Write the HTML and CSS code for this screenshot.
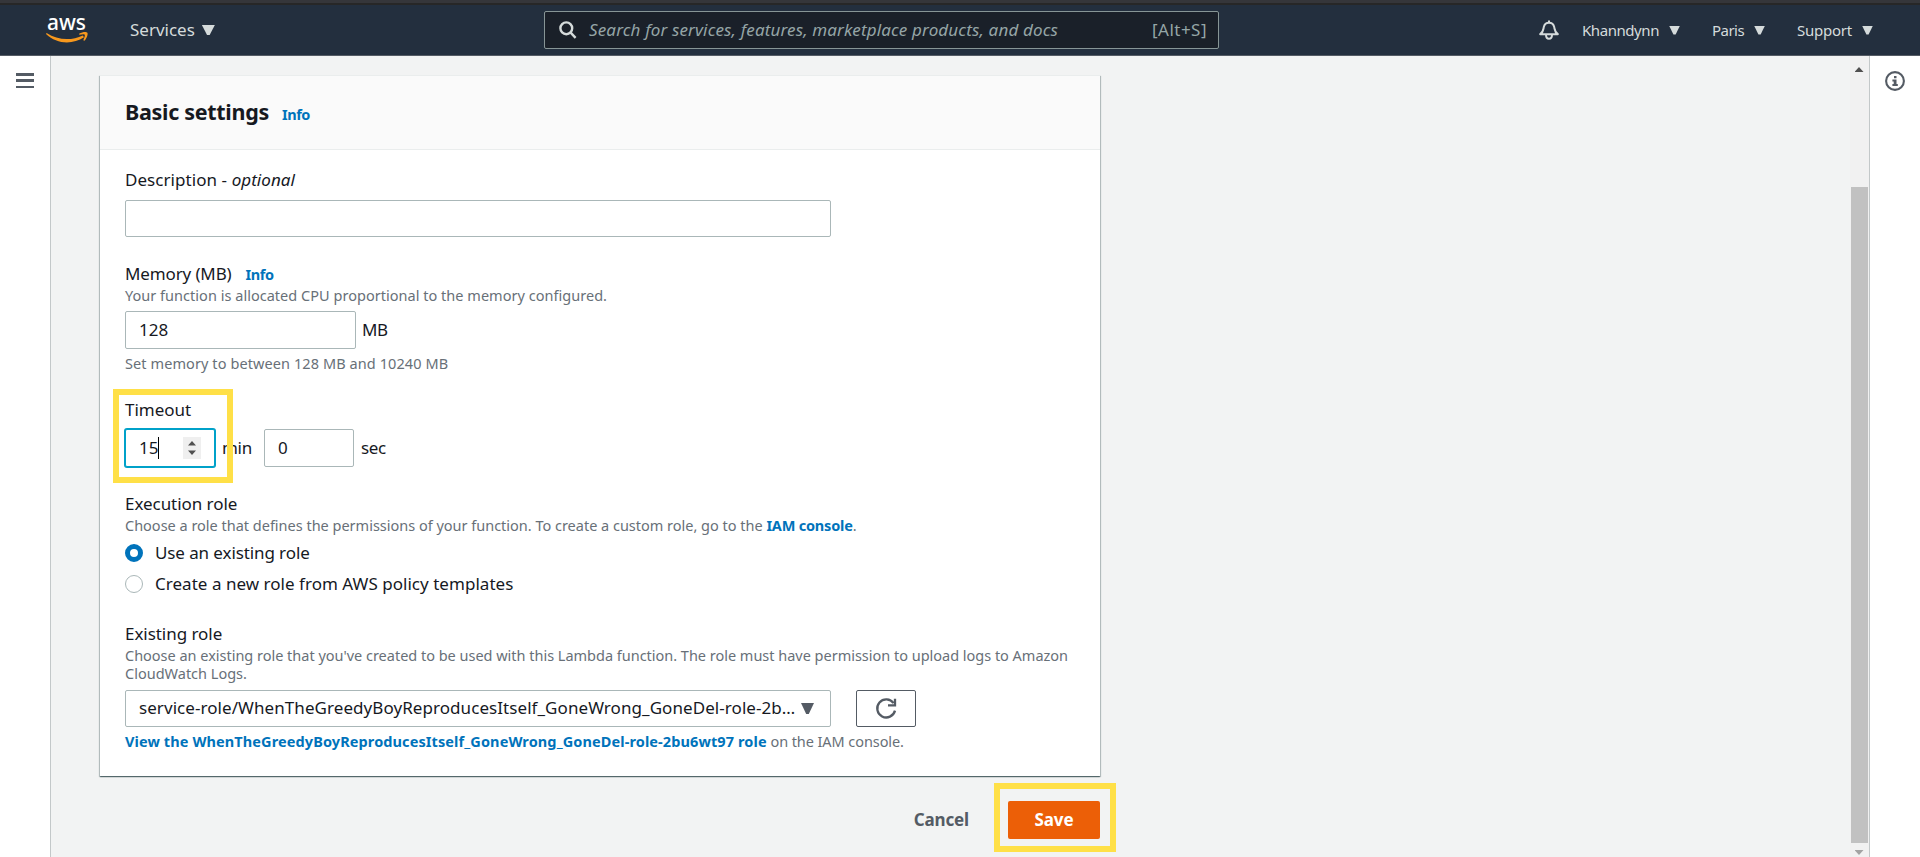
FILE: index.html
```html
<!DOCTYPE html>
<html lang="en">
<head>
<meta charset="utf-8">
<title>Basic settings</title>
<link rel="stylesheet" href="styles.css">
</head>
<body>
<div class="window-edge"></div>
<header class="nav">
  <svg class="logo" viewBox="0 0 42 26" width="42" height="26"><text class="logo-text" x="1" y="13.2" textLength="39" lengthAdjust="spacingAndGlyphs">aws</text><path d="M0.6 16C12 23.6 26 23.6 36.8 18.4L38 20.2C27 27.6 11 27.6 0 17Z" fill="#f7981d"/><path d="M33 16.8C37 14.4 40.5 14.6 41.4 15.7C42.2 17 40.8 21.5 38.4 23.8L37.3 23.2C38.6 20 39.2 18.2 38.7 17.7C38 17 36 17.3 33.4 17.8Z" fill="#f7981d"/></svg>
  <div class="services"><span>Services</span><i class="tri tri-lg"></i></div>
  <div class="search">
    <svg width="18" height="18" viewBox="0 0 18 18" fill="none" stroke="#d5dbdb" stroke-width="2.4"><circle cx="7.3" cy="7.3" r="5.9"/><path d="M11.4 11.4L16.6 16.8"/></svg>
    <span class="placeholder">Search for services, features, marketplace products, and docs</span>
    <span class="shortcut">[Alt+S]</span>
  </div>
  <svg class="bell" width="20" height="20" viewBox="0 0 20 20" fill="none" stroke="#d5dbdb" stroke-width="2" stroke-linejoin="round"><path d="M1.2 14.2C4.5 12 4.2 9.5 4.8 7C5.4 4.4 7 2.8 10 2.8S14.6 4.4 15.2 7C15.8 9.5 15.5 12 18.8 14.2Z"/><path d="M10 0.4V3M7 14.5C7 20.2 13 20.2 13 14.5"/></svg>
  <div class="menu m-user"><span>Khanndynn</span><i class="tri"></i></div>
  <div class="menu m-region"><span>Paris</span><i class="tri"></i></div>
  <div class="menu m-support"><span>Support</span><i class="tri"></i></div>
</header>
<div class="shell">
  <aside class="side side-left"><div class="burger"><i></i><i></i><i></i></div></aside>
  <main class="content">
    <section class="card">
      <div class="card-head"><h1 class="title">Basic settings</h1><a class="info">Info</a></div>
      <div class="card-body">
        <div class="label"><span class="t-desc">Description - <em>optional</em></span></div>
        <div class="input wide"></div>

        <div class="label gap-a"><span class="t-mem">Memory (MB)</span><a class="info info-sm">Info</a></div>
        <div class="hint"><span class="t-alloc">Your function is allocated CPU proportional to the memory configured.</span></div>
        <div class="row mem-row"><div class="input mem">128</div><span class="unit mb">MB</span></div>
        <div class="hint below"><span class="t-range">Set memory to between 128 MB and 10240 MB</span></div>

        <div class="label gap-b"><span>Timeout</span><div class="mark mark-time"></div></div>
        <div class="row time-row">
          <div class="input short focus"><span class="value">15</span><i class="caret"></i><span class="spin"><svg width="8" height="14" viewBox="0 0 8 14"><path d="M0 4.5L4 0L8 4.5ZM0 9.5L4 14L8 9.5Z" fill="#505050"/></svg></span></div>
          <span class="unit min">min</span>
          <div class="input short">0</div>
          <span class="unit sec">sec</span>
        </div>

        <div class="label gap-c"><span class="t-role">Execution role</span></div>
        <div class="hint"><span class="t-choose">Choose a role that defines the permissions of your function. To create a custom role, go to the <a>IAM console</a>.</span></div>
        <div class="radio r1"><i class="dot on"></i><span class="t-use">Use an existing role</span></div>
        <div class="radio r2"><i class="dot"></i><span class="t-create">Create a new role from AWS policy templates</span></div>

        <div class="label gap-d"><span class="t-role">Existing role</span></div>
        <div class="hint two"><span class="t-long">Choose an existing role that you've created to be used with this Lambda function. The role must have permission to upload logs to Amazon</span><br><span>CloudWatch Logs.</span></div>
        <div class="row select-row">
          <div class="input wide select"><span class="t-sel">service-role/WhenTheGreedyBoyReproducesItself_GoneWrong_GoneDel-role-2b…</span><i class="tri tri-dark"></i></div>
          <div class="refresh"><svg width="22" height="22" viewBox="0 0 22 22" fill="none" stroke="#545b64" stroke-width="2.3"><path d="M18.6 5.2A9 9 0 1 0 20 12.6"/><path d="M20 0.8V7.3H13"/></svg></div>
        </div>
        <div class="hint view"><a class="t-view">View the WhenTheGreedyBoyReproducesItself_GoneWrong_GoneDel-role-2bu6wt97 role</a> <span class="t-on">on the IAM console.</span></div>
      </div>
    </section>
    <div class="actions"><span class="cancel">Cancel</span><div class="save"><span>Save</span><div class="mark mark-save"></div></div></div>
  </main>
  <div class="scroll"><i class="up"></i><i class="thumb"></i><i class="down"></i></div>
  <aside class="side side-right"><svg width="20" height="20" viewBox="0 0 20 20"><circle cx="10" cy="10" r="8.9" fill="none" stroke="#545b64" stroke-width="2.1"/><path d="M9 5H11.5V7.3H9ZM7.4 8.6H11.5V13H12.8V15H7.4V13H8.7V10.6H7.4Z" fill="#545b64"/></svg></aside>
</div>
</body>
</html>
```
FILE: styles.css
```css
* { box-sizing: border-box; }
body {
  margin: 0;
  height: 857px;
  overflow: hidden;
  display: flex;
  flex-direction: column;
  font-family: "Noto Sans", "Open Sans", sans-serif;
  font-size: 17px;
  color: #16191f;
  background: #f2f3f3;
}
i { display: block; flex: none; }
span, a, h1 { white-space: nowrap; }
a { color: #0073bb; font-weight: 700; }

.window-edge { flex: none; height: 5px; background: #272727; border-top: 3px solid #35363a; }
.nav {
  flex: none;
  height: 51px;
  display: flex;
  align-items: center;
  padding: 0 47px 1px 46px;
  background: #232f3e;
  border-bottom: 1px solid #545b64;
  color: #d5dbdb;
}
.logo { flex: none; overflow: visible; }
.logo-text { font-family: "Noto Sans", sans-serif; font-size: 22px; font-weight: 500; fill: #fff; }
.services { flex: none; display: flex; align-items: center; gap: 7px; width: 414px; margin-left: 42px; }
.tri { width: 11px; height: 9px; background: #d5dbdb; clip-path: polygon(0 0, 100% 0, 60% 100%, 40% 100%); }
.tri-lg { width: 13px; height: 10px; }
.nav .tri { margin-top: 1px; }
.search {
  flex: none;
  display: flex;
  align-items: center;
  width: 675px;
  height: 38px;
  padding: 0 11px 0 14px;
  background: #1a2029;
  border: 1px solid #879596;
  border-radius: 2px;
  color: #95a5a6;
}
.placeholder { margin-left: 12px; font-style: italic; letter-spacing: .152px; }
.shortcut { margin-left: auto; letter-spacing: .48px; }
.bell { flex: none; margin: 0 23px 0 auto; }
.menu { flex: none; display: flex; align-items: center; gap: 10px; font-size: 15px; }
.m-user, .m-region { margin-right: 32px; }
.m-user { letter-spacing: -.43px; }
.m-region { letter-spacing: -.55px; }
.m-support { letter-spacing: -.24px; }

.shell { flex: 1; display: flex; min-height: 0; }
.side { flex: none; background: #fff; }
.side-left { width: 51px; border-right: 1px solid #c3c8c9; padding: 17px 16px; }
.side-right { width: 51px; border-left: 1px solid #c3c8c9; padding: 15px; }
.side-right svg { display: block; }
.burger { display: flex; flex-direction: column; gap: 3.5px; }
.burger i { width: 18px; height: 2.8px; background: #545b64; }
.content { flex: 1; padding: 19px 0 0 49px; }
.scroll { flex: none; width: 19px; padding-right: 1px; display: flex; flex-direction: column; align-items: center; background: #f1f1f1; }
.up { width: 9px; height: 5px; margin-top: 11px; background: #505050; clip-path: polygon(0 100%, 50% 0, 100% 100%); }
.thumb { width: 17px; height: 656px; margin-top: 115px; background: #c1c1c1; }
.down { width: 9px; height: 5px; margin-top: 7px; background: #a3a3a3; clip-path: polygon(0 0, 50% 100%, 100% 0); }

.card {
  width: 1000px;
  height: 701px;
  background: #fff;
  box-shadow: 0 1px 1px 0 rgba(0, 28, 36, .45), 1px 1px 1px 0 rgba(0, 28, 36, .2), -1px 1px 1px 0 rgba(0, 28, 36, .2);
  border-top: 1px solid #eaeded;
}
.card-head {
  display: flex;
  height: 74px;
  padding-left: 25px;
  background: #fafafa;
  border-bottom: 1px solid #eaeded;
}
.title { margin: 0; font-size: 21.5px; line-height: 72px; font-weight: 700; letter-spacing: -.3px; }
.info { margin-left: 13px; font-size: 14.5px; line-height: 76px; letter-spacing: -.44px; }
.card-body { padding: 18px 25px 0; }
.label { position: relative; display: flex; height: 24px; line-height: 24px; }
.info-sm { margin-left: 14px; line-height: 25px; }
.hint { height: 18px; font-size: 14.5px; line-height: 18px; color: #687078; }
.hint.two { height: 37px; line-height: 18px; }
.input {
  flex: none;
  height: 38px;
  padding-left: 13px;
  line-height: 35px;
  background: #fff;
  border: 1px solid #aab7b8;
  border-radius: 2px;
}
.wide { width: 706px; height: 37px; }
.label + .wide { margin-top: 8px; }
.row { display: flex; align-items: center; }
.unit { margin-left: 7px; line-height: 22px; padding-bottom: 1px; }
.mem { width: 231px; }
.mem-row { margin-top: 7px; }
.below { margin-top: 5px; }
.gap-a { margin-top: 25px; }
.gap-b { margin-top: 26px; }
.time-row { margin-top: 7px; }
.short { width: 90px; }
.focus { display: flex; align-items: center; border-color: #00a1c9; box-shadow: 0 0 0 1px #00a1c9; }
.value { padding-bottom: 2px; }
.caret { width: 1px; height: 22px; background: #000; }
.spin { display: flex; align-items: center; justify-content: center; width: 18px; height: 22px; margin-left: auto; margin-right: 13px; background: #efefef; }
.mb { margin-left: 6px; letter-spacing: -.5px; }
.min { margin-right: 12px; letter-spacing: -.27px; }
.sec { letter-spacing: -.3px; }
.gap-c { margin-top: 25px; }
.radio { display: flex; align-items: center; gap: 12px; height: 24px; line-height: 24px; }
.dot { width: 18px; height: 18px; border: 1px solid #aab7b8; border-radius: 50%; background: #fff; }
.dot.on { border: 5px solid #0073bb; }
.r1 { margin-top: 7px; }
.r2 { margin-top: 7px; }
.gap-d { margin-top: 26px; }
.select-row { margin-top: 7px; gap: 25px; }
.select { display: flex; align-items: center; justify-content: space-between; padding: 0 16px 0 13px; }
.select span { padding-bottom: 2px; }
.tri-dark { width: 13px; height: 11px; background: #545b64; }
.refresh { display: flex; align-items: center; justify-content: center; width: 60px; height: 37px; border: 1px solid #545b64; border-radius: 2px; }
.view { margin-top: 5px; }

.t-desc { letter-spacing: .059px; }
.t-mem { letter-spacing: -.13px; }
.t-alloc { letter-spacing: .026px; }
.t-range { letter-spacing: .09px; }
.t-role { letter-spacing: -.05px; }
.t-choose { letter-spacing: -.008px; }
.t-choose a { letter-spacing: -.2px; }
.t-use { letter-spacing: -.1px; }
.t-create { letter-spacing: .03px; }
.t-long { letter-spacing: -.014px; }
.t-sel { letter-spacing: .066px; }
.t-view { letter-spacing: .105px; }
.t-on { letter-spacing: -.08px; }

.actions { display: flex; align-items: center; justify-content: flex-end; width: 1000px; height: 38px; margin-top: 25px; font-weight: 700; letter-spacing: -.15px; }
.actions span { padding-bottom: 2px; }
.cancel { color: #545b64; margin-right: 39px; }
.save { position: relative; display: flex; align-items: center; justify-content: center; width: 92px; height: 38px; background: #ec5f07; color: #fff; border-radius: 2px; }

.mark { position: absolute; border: 6px solid #ffe047; z-index: 2; }
.mark-time { left: -12px; top: -9px; width: 120px; height: 94px; }
.mark-save { left: -14px; top: -18px; width: 122px; height: 69px; }
```
